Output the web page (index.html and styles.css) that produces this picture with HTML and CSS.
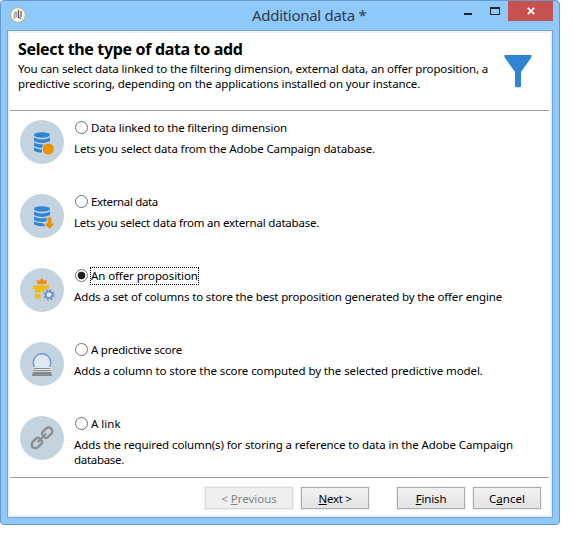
FILE: index.html
```
<!DOCTYPE html>
<html lang="en">
<head>
<meta charset="utf-8">
<title>Additional data</title>
<link rel="stylesheet" href="styles.css">
</head>
<body>
<div class="window">
  <div class="titlebar">
    <svg class="app-icon" width="16" height="16" viewBox="0 0 16 16"><circle cx="8" cy="8" r="7.400" fill="#f6f5f2" stroke="#a9bf70"/><path d="M4.500 12V6.500l2-2M6.500 5v5" fill="none" stroke="#aaa" stroke-width="1.600"/><path d="M8.500 3v7M7.500 10l3.500 1.500M11 4v6" fill="none" stroke="#555" stroke-width="1.200"/></svg>
    <div class="caption"><span class="t-caption">Additional data *</span></div>
    <div class="controls">
      <svg width="50" height="20" viewBox="0 0 50 20"><path d="M6 12h8v2H6z" fill="#222"/><path d="M32 6h10v8H32z" fill="#222"/><path d="M33 8h8v5h-8z" fill="#8fc8fa"/></svg>
      <div class="close"><svg width="8" height="8" viewBox="0 0 8 8"><path d="M.8.8l6.400 6.400M7.200.8L.8 7.200" stroke="#fff" stroke-width="1.800"/></svg></div>
    </div>
  </div>
  <div class="client">
    <header class="header">
      <div class="intro">
        <h1><span>Select the type of data to add</span></h1>
        <p><span class="t-in1">You can select data linked to the filtering dimension, external data, an offer proposition, a</span><br><span class="t-in2">predictive scoring, depending on the applications installed on your instance.</span></p>
      </div>
      <svg class="funnel" width="28" height="33" viewBox="0 0 28 33"><path d="M.5 0h27v2.200L17 17v14q0 1.200-1.200 1.200h-3.600q-1.200 0-1.200-1.200V17L.5 2.200V0z" fill="#2f85d3"/></svg>
    </header>
    <main class="options">
      <section class="option">
        <svg class="badge" viewBox="0 0 44 44"><circle cx="22" cy="22" r="22" fill="#c3d4e0"/><g fill="#2f85d3"><ellipse cx="22" cy="15" rx="8" ry="2.700"/><path d="M14 17.500q8 4 16 0v3.500q-8 4-16 0z"/><path d="M14 22.500q8 4 16 0v3.500q-8 4-16 0z"/><path d="M14 27.500q4 2 8 2v3q-6 0-8-2z"/></g><circle cx="28.300" cy="29" r="6.500" fill="#c3d4e0"/><circle cx="28.300" cy="29" r="5.600" fill="#ee9100"/></svg>
        <div class="text"><label class="choice"><i class="radio"></i><span class="name t-l1">Data linked to the filtering dimension</span></label>
        <p><span class="t-d1">Lets you select data from the Adobe Campaign database.</span></p></div>
      </section>
      <section class="option">
        <svg class="badge" viewBox="0 0 44 44"><circle cx="22" cy="22" r="22" fill="#c3d4e0"/><g fill="#2f85d3"><ellipse cx="22" cy="15" rx="8" ry="2.700"/><path d="M14 17.500q8 4 16 0v3.500q-8 4-16 0z"/><path d="M14 22.500q8 4 16 0v3.500q-8 4-16 0z"/><path d="M14 27.500q6 2.500 12 1.500v3q-8 1-12-1.500z"/></g><path d="M27.500 23.500h4v6h3L29.500 35l-5-5.500h3z" fill="#ee9100" stroke="#c3d4e0" stroke-width="2" paint-order="stroke"/></svg>
        <div class="text"><label class="choice"><i class="radio"></i><span class="name t-l2">External data</span></label>
        <p><span class="t-d2">Lets you select data from an external database.</span></p></div>
      </section>
      <section class="option">
        <svg class="badge" viewBox="0 0 44 44"><circle cx="22" cy="22" r="22" fill="#c3d4e0"/><path d="M17.500 16.200L16.500 12l2.700.8 2.500-2.800 2.500 2.800 2.800-.8-1 4.200z" fill="#f28d10"/><path d="M13.300 17.500H29V21.500H13.300z" fill="#f2b90c"/><path d="M15 21h10v3.500H15zM15 26h5.700v4.500H15z" fill="#f2b90c"/><path d="M20.700 21.500h1.200V31h-1.200z" fill="#c3d4e0"/><circle cx="29" cy="26.800" r="6.600" fill="#c3d4e0"/><circle cx="29" cy="26.800" r="4.800" fill="none" stroke="#7497cb" stroke-width="2" stroke-dasharray="1.900 1.870"/><circle cx="29" cy="26.800" r="3.300" fill="#dfe9f2" stroke="#7497cb" stroke-width="1.900"/></svg>
        <div class="text"><label class="choice"><i class="radio checked"></i><span class="name focused t-l3">An offer proposition</span></label>
        <p><span class="t-d3">Adds a set of columns to store the best proposition generated by the offer engine</span></p></div>
      </section>
      <section class="option">
        <svg class="badge" viewBox="0 0 44 44"><circle cx="22" cy="22" r="22" fill="#c3d4e0"/><path d="M14.500 24.800a8.700 8.700 0 1 1 15 0z" fill="#dfe9f2"/><path d="M14.500 24.800a8.700 8.700 0 1 1 15 0" fill="none" stroke="#7497cb" stroke-width="1.400"/><path d="M13.500 25h17v4h-17z" fill="#e6ebef"/><path d="M14 26h16v1H14zM13.300 28h17.400v1H13.300zM13 30h18l1.200 4H11.800z" fill="#8b8b8b"/></svg>
        <div class="text"><label class="choice"><i class="radio"></i><span class="name t-l4">A predictive score</span></label>
        <p><span class="t-d4">Adds a column to store the score computed by the selected predictive model.</span></p></div>
      </section>
      <section class="option">
        <svg class="badge" viewBox="0 0 44 44"><circle cx="22" cy="22" r="22" fill="#c3d4e0"/><g transform="translate(22 21.800) rotate(-45)" fill="none" stroke="#8d8d8d" stroke-width="2.400" stroke-linecap="round"><path d="M2.300-2.200q.6-1.500 2.500-1.500h4.600a3.700 3.700 0 0 1 0 7.400H4.800q-1.900 0-2.500-1.500M-2.300-2.200q-.6-1.500-2.500-1.500h-4.600a3.700 3.700 0 0 0 0 7.400h4.600q1.900 0 2.500-1.500M-5 0H5"/></g></svg>
        <div class="text"><label class="choice"><i class="radio"></i><span class="name t-l5">A link</span></label>
        <p><span class="t-d5">Adds the required column(s) for storing a reference to data in the Adobe Campaign</span><br><span class="t-d6">database.</span></p></div>
      </section>
    </main>
    <footer class="footer">
      <button class="btn wide" disabled><span>&lt; <u>P</u>revious</span></button>
      <button class="btn"><span class="t-b2"><u>N</u>ext &gt;</span></button>
      <button class="btn apart"><span class="t-b3"><u>F</u>inish</span></button>
      <button class="btn"><span>C<u>a</u>ncel</span></button>
    </footer>
  </div>
</div>
</body>
</html>
```
FILE: styles.css
```
* { box-sizing: border-box; }
body { margin: 0; background: #fff; color: #000; font: 11.5px/15px "Noto Sans", "Open Sans", sans-serif; }
h1, p { margin: 0; }
span { white-space: nowrap; }
.window { width: 560px; height: 525px; padding: 0 6px 6px; border: 1px solid #6699cc; border-radius: 4px; background: #8fc8fa; }
.titlebar { height: 29px; display: flex; align-items: flex-start; }
.app-icon { margin: 6px 0 0 3px; }
.caption { flex: 1; padding: 3px 0 0 226px; font-size: 15px; line-height: 22px; color: #303c48; }
.controls { display: flex; }
.close { width: 45px; height: 20px; background: #c75050; display: flex; align-items: center; justify-content: center; }
.client { width: 546px; height: 488px; border: 1px solid #6fa4d6; padding: 2px; background: #fff; box-shadow: inset 0 0 0 2px #f0f0f0; display: flex; flex-direction: column; }
.header { height: 78px; margin-right: 1px; border-bottom: 1px solid #a0a0a0; display: flex; justify-content: space-between; padding: 6px 17px 0 8px; }
.intro { width: 480px; }
h1 { font-size: 16px; line-height: 20px; height: 22px; font-weight: 700; letter-spacing: -0.34px; }
.funnel { margin-top: 16px; flex: none; }
.options { height: 366px; padding: 9px 0 0 10px; }
.option { height: 74px; display: flex; gap: 10px; }
.badge { width: 44px; height: 44px; flex: none; }
.choice { height: 16px; display: flex; align-items: flex-start; gap: 3px; margin-bottom: 5px; padding-left: 1px; }
.radio { width: 13px; height: 13px; margin-top: 1px; border: 1px solid #707070; border-radius: 50%; background: #fff; flex: none; }
.checked { background: radial-gradient(circle, #202020 3.500px, #fff 4.200px); }
.name { height: 16px; line-height: 16px; }
.focused { outline: 1px dotted #000; }
.footer { flex: 1; margin-right: 1px; border-top: 1px solid #a0a0a0; padding: 9px 8px 0 0; display: flex; justify-content: flex-end; gap: 8px; }
.btn { width: 68px; height: 22px; padding: 0; border: 1px solid #acacac; background: linear-gradient(#f1f1f1, #e4e4e4); font: inherit; color: #000; box-shadow: 0 0 0 1px #f0f0f0; }
.wide { width: 88px; }
.btn:disabled { color: #838383; border-color: #d9d9d9; background: #efefef; }
.apart { margin-left: 20px; }
u { text-underline-offset: 1px; }

/* Tracking per line */
.t-caption { letter-spacing: -0.29px; }
.t-in1 { letter-spacing: -0.14px; }
.t-in2 { letter-spacing: -0.117px; }
.t-l1 { letter-spacing: -0.14px; }
.t-d1 { letter-spacing: -0.13px; }
.t-l2 { letter-spacing: -0.35px; }
.t-d2 { letter-spacing: -0.21px; }
.t-l3 { letter-spacing: -0.1px; }
.t-d3 { letter-spacing: -0.146px; }
.t-l4 { letter-spacing: -0.25px; }
.t-d4 { letter-spacing: -0.095px; }
.t-d5 { letter-spacing: -0.11px; }
.t-d6 { letter-spacing: -0.3px; }
.t-b2 { letter-spacing: -0.3px; }
.t-b3 { letter-spacing: -0.15px; }
```
